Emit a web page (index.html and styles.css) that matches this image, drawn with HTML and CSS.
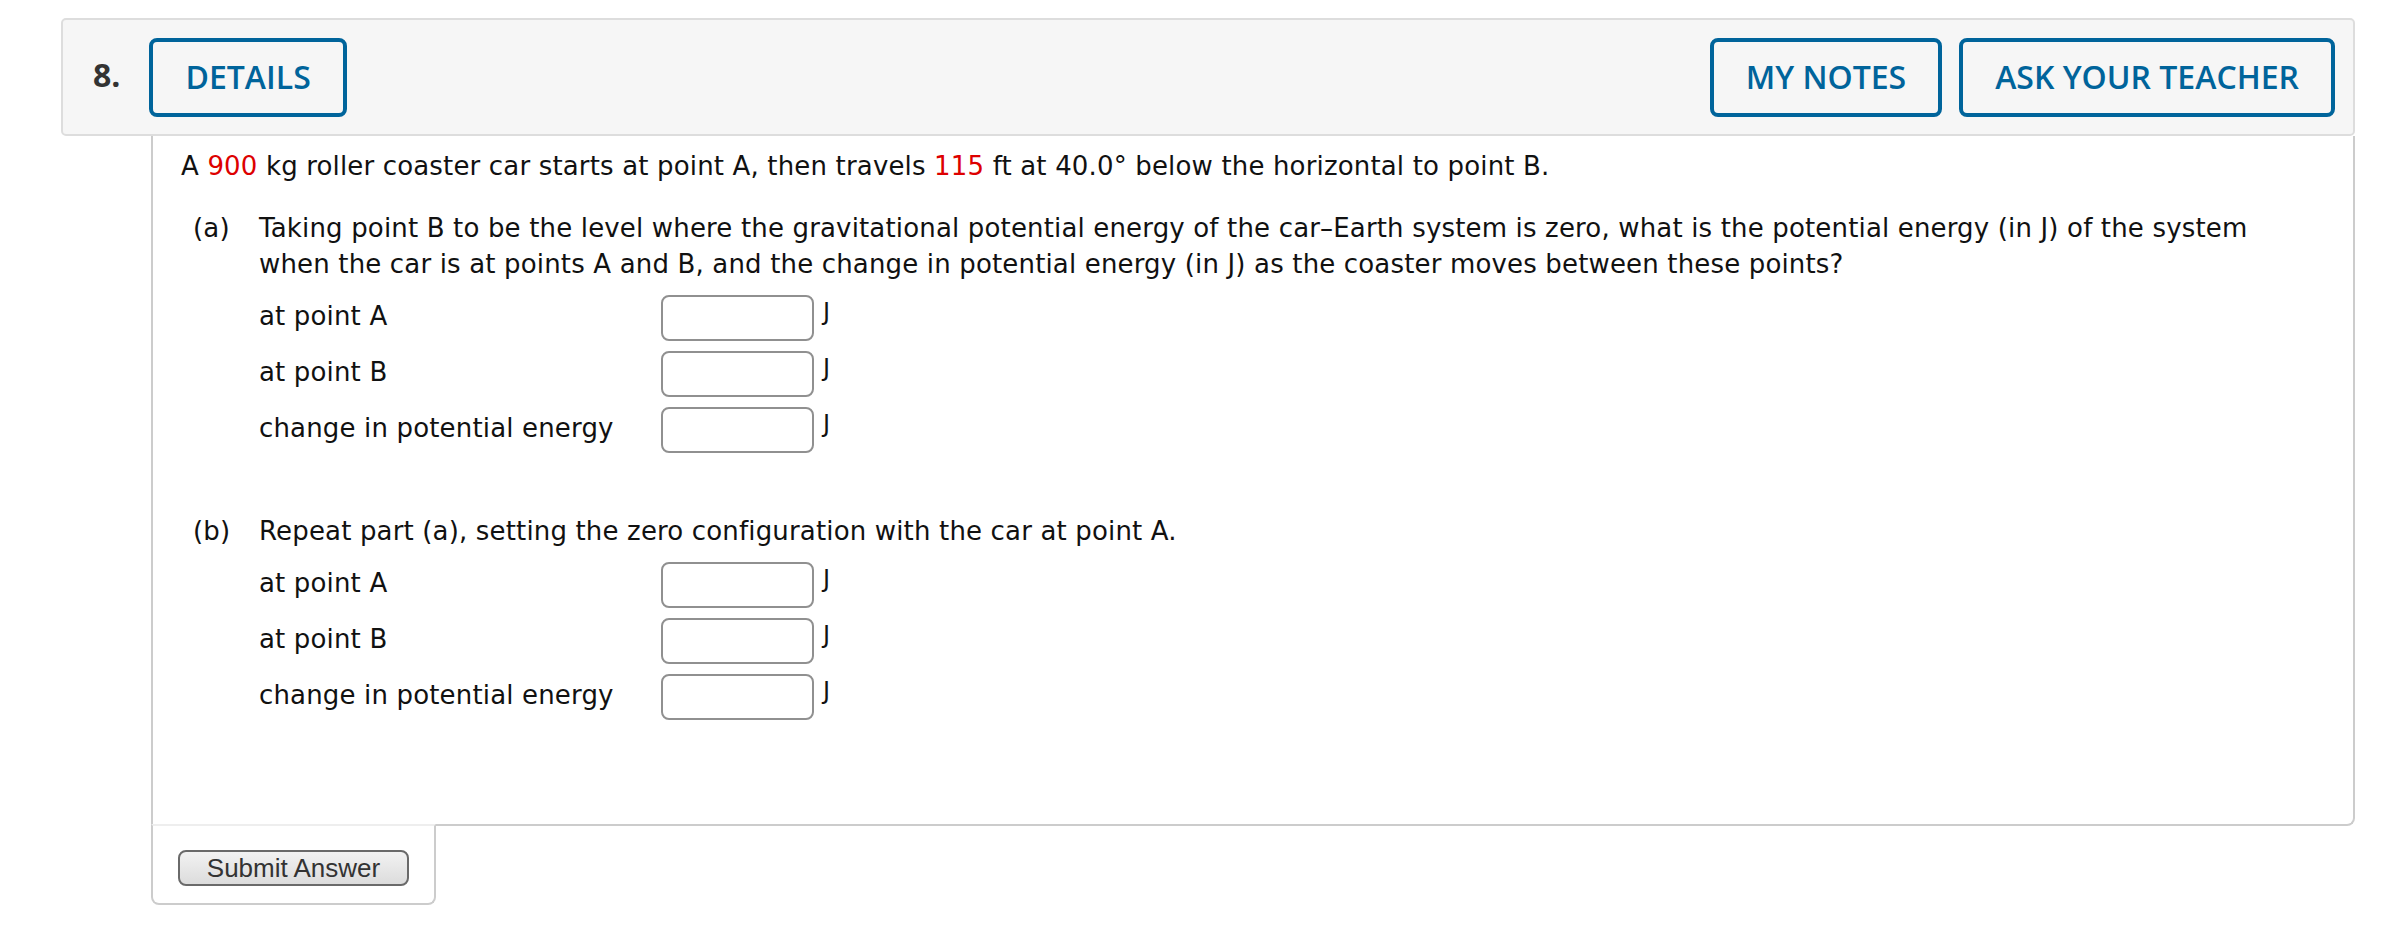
FILE: index.html
```html
<!DOCTYPE html>
<html lang="en">
<head>
<meta charset="utf-8">
<title>Question 8</title>
<link rel="stylesheet" href="styles.css">
</head>
<body>
<div class="question">
  <div class="q-header">
    <span class="q-num">8.</span>
    <button class="hbtn">DETAILS</button>
    <div class="spacer"></div>
    <button class="hbtn">MY NOTES</button>
    <button class="hbtn">ASK YOUR TEACHER</button>
  </div>
  <div class="panel">
    <p class="intro">A <span class="red">900</span> kg roller coaster car starts at point A, then travels <span class="red">115</span> ft at 40.0° below the horizontal to point B.</p>
    <div class="part part-a">
      <div class="part-text"><span class="marker">(a)</span><span class="ptext">Taking point B to be the level where the gravitational potential energy of the car–Earth system is zero, what is the potential energy (in J) of the system when the car is at points A and B, and the change in potential energy (in J) as the coaster moves between these points?</span></div>
      <div class="rows">
        <div class="row"><span class="label">at point A</span><input class="ans" type="text"><span class="unit">J</span></div>
        <div class="row"><span class="label">at point B</span><input class="ans" type="text"><span class="unit">J</span></div>
        <div class="row"><span class="label">change in potential energy</span><input class="ans" type="text"><span class="unit">J</span></div>
      </div>
    </div>
    <div class="part part-b">
      <div class="part-text"><span class="marker">(b)</span><span class="ptext">Repeat part (a), setting the zero configuration with the car at point A.</span></div>
      <div class="rows">
        <div class="row"><span class="label">at point A</span><input class="ans" type="text"><span class="unit">J</span></div>
        <div class="row"><span class="label">at point B</span><input class="ans" type="text"><span class="unit">J</span></div>
        <div class="row"><span class="label">change in potential energy</span><input class="ans" type="text"><span class="unit">J</span></div>
      </div>
    </div>
  </div>
  <div class="submit-tab">
    <button class="submit">Submit Answer</button>
  </div>
</div>
</body>
</html>
```
FILE: styles.css
```css
html, body {
  margin: 0;
  padding: 0;
  background: #ffffff;
}
body {
  font-family: "DejaVu Sans", Verdana, sans-serif;
  color: #000;
}
.question {
  margin: 18px 0 0 61px;
  width: 2294px;
}
.q-header {
  box-sizing: border-box;
  height: 118px;
  display: flex;
  align-items: center;
  background: #f6f6f6;
  border: 2px solid #dddddd;
  border-radius: 5px;
  padding: 0 18px 0 30px;
  gap: 17px;
}
.q-num {
  font-family: "Open Sans", sans-serif;
  font-weight: 700;
  font-size: 32px;
  color: #333;
  margin-right: 12px;
  position: relative;
  top: -3px;
}
.spacer { flex: 1; }
.hbtn {
  box-sizing: border-box;
  height: 79px;
  padding: 0 32px;
  background: transparent;
  border: 4px solid #00649b;
  border-radius: 8px;
  color: #00649b;
  font-family: "Open Sans", sans-serif;
  font-weight: 600;
  font-size: 32px;
  line-height: 1;
}
.panel {
  box-sizing: border-box;
  margin-left: 90px;
  border: 2px solid #cccccc;
  border-top: none;
  border-radius: 0 0 8px 0;
  padding: 12px 28px 100px 28px;
  height: 690px;
  font-size: 26px;
  line-height: 36px;
  letter-spacing: 0.16px;
  color: #111;
}
.intro { margin: 0; }
.red { color: #dd0000; }
.part { margin-top: 26px; }
.part-b { margin-top: 60px; }
.part-text {
  display: flex;
}
.marker {
  width: 78px;
  padding-left: 12px;
  box-sizing: border-box;
  flex: none;
}
.ptext { flex: 1; padding-right: 40px; }
.rows {
  margin-top: 13px;
  padding-left: 78px;
  display: flex;
  flex-direction: column;
  gap: 10px;
}
.row {
  display: flex;
  align-items: center;
  height: 46px;
}
.label { width: 402px; flex: none; position: relative; top: -2px; }
.ans {
  box-sizing: border-box;
  width: 153px;
  height: 46px;
  border: 2px solid #909090;
  border-radius: 8px;
  background: #fff;
  margin: 0;
}
.unit { margin-left: 9px; position: relative; top: -6px; font-size: 24px; }
.submit-tab {
  box-sizing: border-box;
  margin-left: 90px;
  margin-top: -2px;
  width: 285px;
  height: 81px;
  border: 2px solid #cccccc;
  border-top-color: #eeeeee;
  border-radius: 0 0 8px 8px;
  padding: 24px 0 0 25px;
}
.submit {
  box-sizing: border-box;
  width: 231px;
  height: 36px;
  border: 2px solid #6a6a6a;
  border-radius: 8px;
  background: linear-gradient(#f2f2f2, #dcdcdc);
  font-family: "Liberation Sans", Arial, sans-serif;
  font-size: 26px;
  color: #333;
  padding: 0;
  line-height: 1;
}
```
